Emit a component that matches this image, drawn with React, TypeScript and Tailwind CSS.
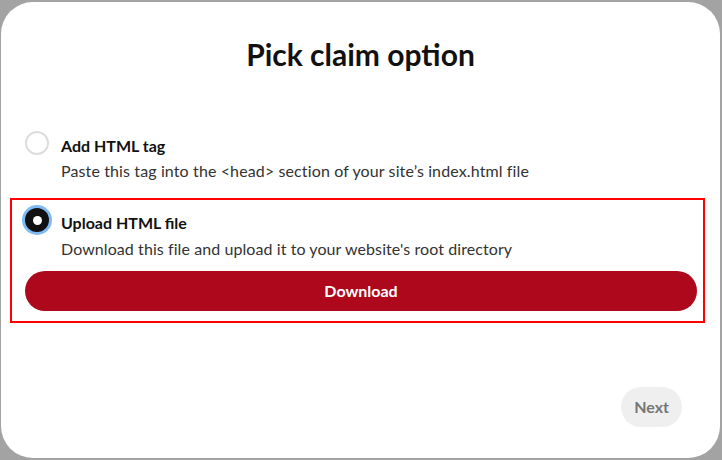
import { useState } from 'react';

type Option = {
  id: string;
  title: string;
  description: string;
};

const options: Option[] = [
  {
    id: 'tag',
    title: 'Add HTML tag',
    description: "Paste this tag into the <head> section of your site\u2019s index.html file",
  },
  {
    id: 'file',
    title: 'Upload HTML file',
    description: "Download this file and upload it to your website's root directory",
  },
];

function Radio({ checked }: { checked: boolean }) {
  if (checked) {
    return (
      <span className="flex h-6 w-6 shrink-0 items-center justify-center rounded-full bg-[#111111] ring-[3px] ring-[#7fbaf5]">
        <span className="h-[9px] w-[9px] rounded-full bg-white" />
      </span>
    );
  }
  return <span className="block h-6 w-6 shrink-0 rounded-full border-2 border-[#dddddd] bg-white" />;
}

export default function App() {
  const [selected, setSelected] = useState('file');

  return (
    <div
      className="h-[460px] w-[722px] overflow-hidden bg-[#a3a3a3] pl-[1px] pt-[2px]"
      style={{ fontFamily: 'Lato, "Noto Sans", sans-serif' }}
    >
      <div className="flex h-[456px] w-[719px] flex-col rounded-[32px] bg-white">
        <h1 className="pt-[34px] text-center text-[30px] font-bold leading-[36px] text-[#111111]">
          Pick claim option
        </h1>

        <div className="mt-[59px] flex flex-col">
          {/* option 1 */}
          <div className="flex cursor-pointer gap-3 pl-[24px]" onClick={() => setSelected('tag')}>
            <Radio checked={selected === 'tag'} />
            <div className="pt-[3px]">
              <div className="text-[16px] font-bold leading-6 text-[#111111]">{options[0].title}</div>
              <div className="mt-[1px] text-[16px] leading-6 tracking-[0.12px] text-[#333333]">
                {options[0].description}
              </div>
            </div>
          </div>

          {/* option 2, highlighted */}
          <div className="ml-[9px] mt-[15px] w-[695px] border-2 border-[#ff0000] pb-[10px] pl-[13px] pr-[6px] pt-[8px]">
            <div className="flex cursor-pointer gap-3" onClick={() => setSelected('file')}>
              <Radio checked={selected === 'file'} />
              <div className="pt-[3px]">
                <div className="text-[16px] font-bold leading-6 text-[#111111]">{options[1].title}</div>
                <div className="mt-[2px] text-[16px] leading-6 tracking-[0.08px] text-[#333333]">
                  {options[1].description}
                </div>
              </div>
            </div>
            <button className="mt-[10px] h-10 w-full rounded-full bg-[#ad081b] text-[16px] font-bold text-white">
              Download
            </button>
          </div>
        </div>

        <div className="mt-auto flex justify-end pb-[31px] pr-[38px]">
          <button className="h-10 rounded-full bg-[#efefef] px-[13px] text-[16px] font-bold text-[#767676]">
            Next
          </button>
        </div>
      </div>
    </div>
  );
}
